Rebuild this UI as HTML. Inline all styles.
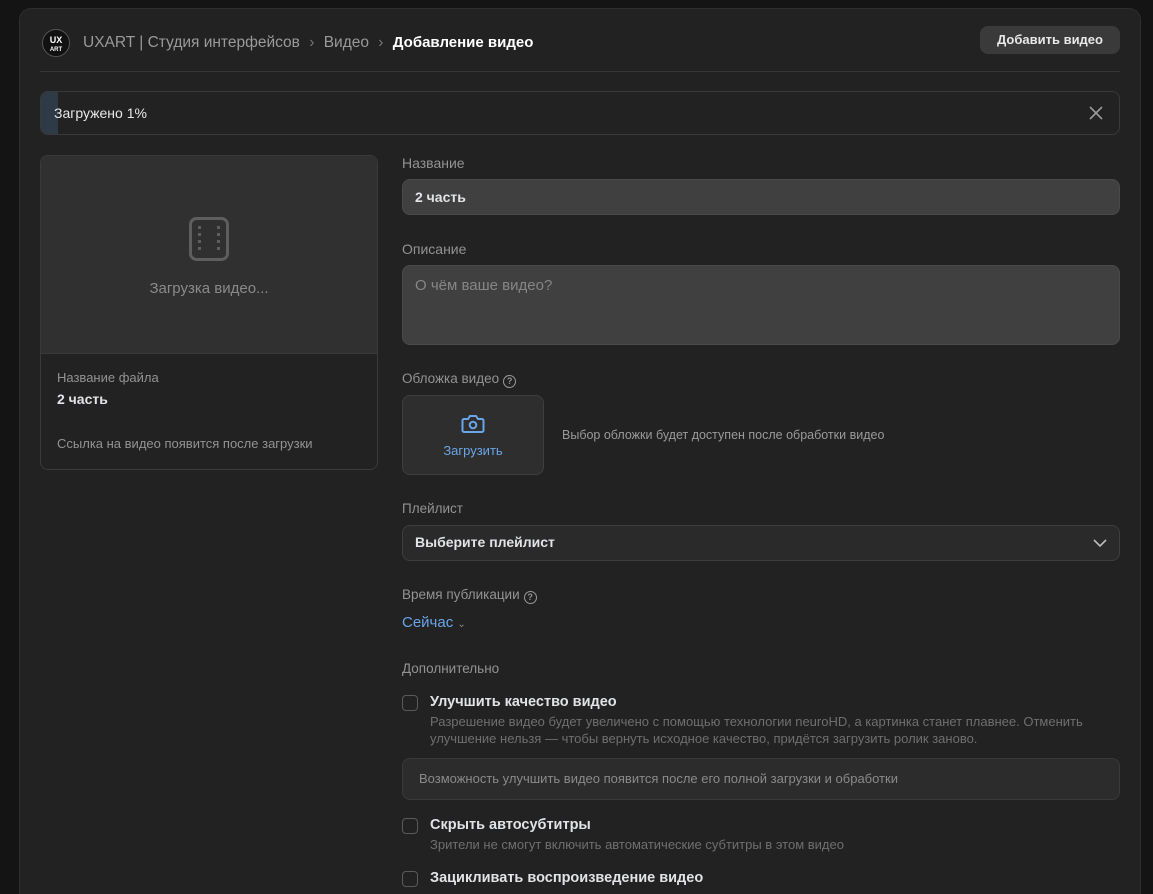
<!DOCTYPE html>
<html><head><meta charset="utf-8"><style>
*{box-sizing:border-box;margin:0;padding:0}
html,body{width:1153px;height:894px;overflow:hidden}
body{background:#141414;font-family:"Liberation Sans","Noto Sans CJK SC",sans-serif;position:relative;color:#e1e3e6}
.panel{position:absolute;left:19px;top:8px;width:1122px;height:886px;background:#222222;border:1px solid #2e2e2e;border-bottom:none;border-radius:12px 12px 0 0}
.a{position:absolute}
.lbl{font-size:14px;color:#939393}
.box{border:1px solid #3a3a3a;border-radius:8px}
.cb{position:absolute;left:402px;width:16px;height:16px;border:1.5px solid #5a5a5a;border-radius:4px}
.t{font-size:14.5px;font-weight:bold;color:#e1e3e6}
.s{font-size:13px;color:#6f6f6f;line-height:17px}
.q{display:inline-block;width:13px;height:13px;border:1.3px solid #999;border-radius:50%;font-size:9px;text-align:center;line-height:11px;vertical-align:-1px;font-weight:bold;margin-left:4px}
</style></head><body>
<div class="panel"></div>
<div class="a" style="left:42px;top:29px;width:28px;height:28px;border-radius:50%;background:#111;border:1px solid #555;color:#fff;text-align:center;font-weight:bold;font-size:9px;line-height:8px;padding-top:6px">UX<br><span style="font-size:6px">ART</span></div>
<div class="a" style="left:83px;top:34px;font-size:15.5px;color:#9a9a9a;white-space:nowrap">UXART | Студия интерфейсов <span style="color:#777;margin:0 5px">›</span> Видео <span style="color:#777;margin:0 5px">›</span> <span style="color:#fff;font-weight:bold;font-size:15px">Добавление видео</span></div>
<div class="a" style="left:980px;top:26px;width:140px;height:28px;background:#3a3a3a;border-radius:8px;font-size:13px;font-weight:bold;color:#e8e8e8;text-align:center;line-height:28px">Добавить видео</div>
<div class="a" style="left:40px;top:71px;width:1080px;height:1px;background:#363636"></div>
<div class="a box" style="left:40px;top:91px;width:1080px;height:44px;overflow:hidden"><div style="position:absolute;left:0;top:0;width:17px;height:44px;background:#2e3a46"></div></div>
<div class="a" style="left:54px;top:105px;font-size:14px;color:#e8e8e8">Загружено 1%</div>
<svg class="a" style="left:1089px;top:106px" width="14" height="14"><path d="M1 1L13 13M13 1L1 13" stroke="#999" stroke-width="1.6"/></svg>
<div class="a box" style="left:40px;top:155px;width:338px;height:315px;overflow:hidden"><div style="height:198px;background:#303030;border-bottom:1px solid #3a3a3a"></div></div>
<svg class="a" style="left:189px;top:217px" width="40" height="44"><rect x="1.5" y="1.5" width="37" height="41" rx="6" fill="none" stroke="#5e5e5e" stroke-width="3"/><g fill="#5e5e5e"><rect x="9" y="9" width="3" height="3"/><rect x="9" y="16" width="3" height="3"/><rect x="9" y="23" width="3" height="3"/><rect x="9" y="30" width="3" height="3"/><rect x="28" y="9" width="3" height="3"/><rect x="28" y="16" width="3" height="3"/><rect x="28" y="23" width="3" height="3"/><rect x="28" y="30" width="3" height="3"/></g></svg>
<div class="a" style="left:40px;width:338px;top:280px;text-align:center;font-size:15px;color:#8a8a8a">Загрузка видео...</div>
<div class="a lbl" style="left:57px;top:370px;font-size:13px">Название файла</div>
<div class="a t" style="left:57px;top:391px;font-size:14px">2 часть</div>
<div class="a lbl" style="left:57px;top:436px;font-size:13px">Ссылка на видео появится после загрузки</div>

<div class="a lbl" style="left:402px;top:155px">Название</div>
<div class="a box" style="left:402px;top:179px;width:718px;height:36px;background:#404040;border-color:#4a4a4a"></div>
<div class="a t" style="left:415px;top:189px;font-size:14px">2 часть</div>
<div class="a lbl" style="left:402px;top:241px">Описание</div>
<div class="a box" style="left:402px;top:265px;width:718px;height:80px;background:#404040;border-color:#4a4a4a"></div>
<div class="a" style="left:415px;top:277px;font-size:15px;color:#868686">О чём ваше видео?</div>
<div class="a lbl" style="left:402px;top:371px;font-size:13.5px">Обложка видео<span class="q">?</span></div>
<div class="a box" style="left:402px;top:395px;width:142px;height:80px;background:#2e2e2e;border-color:#3e3e3e"></div>
<svg class="a" style="left:461px;top:413px" width="24" height="22"><path d="M3 6h4l2-3h6l2 3h4a1.5 1.5 0 0 1 1.5 1.5v10a1.5 1.5 0 0 1-1.5 1.5H3a1.5 1.5 0 0 1-1.5-1.5v-10A1.5 1.5 0 0 1 3 6z" fill="none" stroke="#6aa5e8" stroke-width="2"/><circle cx="12" cy="12" r="3.3" fill="none" stroke="#6aa5e8" stroke-width="2"/></svg>
<div class="a" style="left:402px;width:142px;top:443px;text-align:center;font-size:13px;color:#6aa5e8">Загрузить</div>
<div class="a" style="left:562px;top:428px;font-size:12.5px;color:#9a9a9a">Выбор обложки будет доступен после обработки видео</div>
<div class="a lbl" style="left:402px;top:501px;font-size:13.5px">Плейлист</div>
<div class="a box" style="left:402px;top:525px;width:718px;height:36px;background:#2a2a2a;border-color:#3e3e3e"></div>
<div class="a t" style="left:415px;top:534px;font-size:14px">Выберите плейлист</div>
<svg class="a" style="left:1093px;top:538px" width="14" height="10"><path d="M1 2l6 6 6-6" fill="none" stroke="#bbb" stroke-width="1.6"/></svg>
<div class="a lbl" style="left:402px;top:587px;font-size:13.5px">Время публикации<span class="q">?</span></div>
<div class="a" style="left:402px;top:614px;font-size:15px;color:#6aa5e8">Сейчас <span style="font-size:10px;color:#888">⌄</span></div>
<div class="a lbl" style="left:402px;top:661px;font-size:13.5px">Дополнительно</div>
<div class="cb" style="top:695px"></div>
<div class="a t" style="left:430px;top:694px">Улучшить качество видео</div>
<div class="a s" style="left:430px;top:713px;width:690px">Разрешение видео будет увеличено с помощью технологии neuroHD, а картинка станет плавнее. Отменить улучшение нельзя — чтобы вернуть исходное качество, придётся загрузить ролик заново.</div>
<div class="a box" style="left:402px;top:758px;width:718px;height:42px;background:#2c2c2c;border-color:#3a3a3a"></div>
<div class="a" style="left:419px;top:771px;font-size:13px;color:#8a8a8a">Возможность улучшить видео появится после его полной загрузки и обработки</div>
<div class="cb" style="top:818px"></div>
<div class="a t" style="left:430px;top:817px">Скрыть автосубтитры</div>
<div class="a s" style="left:430px;top:836px">Зрители не смогут включить автоматические субтитры в этом видео</div>
<div class="cb" style="top:871px"></div>
<div class="a t" style="left:430px;top:870px">Зацикливать воспроизведение видео</div>
</body></html>
